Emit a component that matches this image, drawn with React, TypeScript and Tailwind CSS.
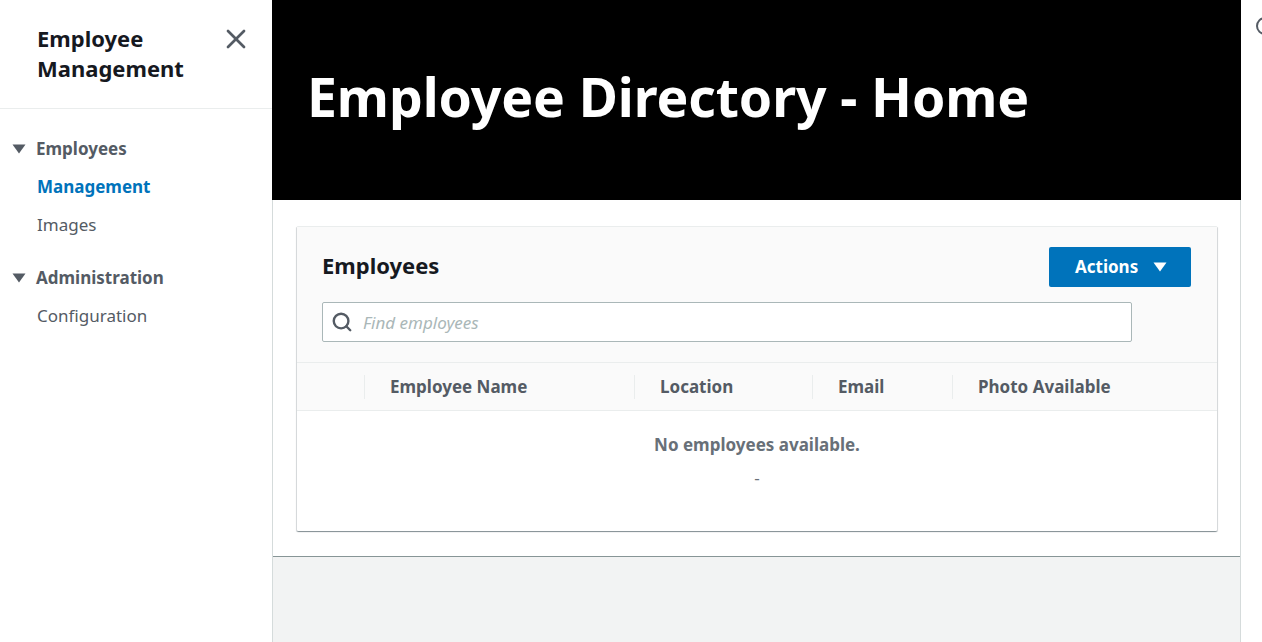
import { Search, X } from "lucide-react";

const columns = [
  { label: "Employee Name", width: "w-[270px]" },
  { label: "Location", width: "w-[178px]" },
  { label: "Email", width: "w-[140px]" },
  { label: "Photo Available", width: "flex-1" },
];

function Caret({ className }: { className: string }) {
  return (
    <svg viewBox="0 0 14 10" className={className} fill="currentColor">
      <path d="M0.5 0.5h13L7 9.5z" />
    </svg>
  );
}

function NavSection({ title, children }: { title: string; children: React.ReactNode }) {
  return (
    <div className="pl-3">
      <div className="flex h-[38px] items-center gap-[10px] text-[17px] font-bold text-[#545b64]">
        <Caret className="h-[10px] w-[14px]" />
        <span>{title}</span>
      </div>
      <div className="pl-[25px]">{children}</div>
    </div>
  );
}

export default function App() {
  return (
    <div className="flex h-screen overflow-hidden bg-white font-['Noto_Sans',sans-serif] text-[17px]">
      <aside className="w-[272px] shrink-0">
        <div className="flex h-[109px] justify-between border-b border-[#eaeded] pt-[23px] pr-[20px] pl-[37px]">
          <h2 className="text-[22px] leading-[30px] font-bold text-[#16191f]">
            Employee
            <br />
            Management
          </h2>
          <X className="h-[32px] w-[32px] text-[#545b64]" strokeWidth={2} />
        </div>
        <nav className="flex flex-col gap-[15px] pt-[21px]">
          <NavSection title="Employees">
            <div className="flex h-[38px] items-center font-bold text-[#0073bb]">Management</div>
            <div className="flex h-[38px] items-center text-[#545b64]">Images</div>
          </NavSection>
          <NavSection title="Administration">
            <div className="flex h-[38px] items-center text-[#545b64]">Configuration</div>
          </NavSection>
        </nav>
      </aside>

      <main className="flex w-[969px] shrink-0 flex-col border-r border-l border-[#d5dbdb]">
        <header className="-mr-px -ml-px flex h-[200px] items-center bg-black pb-[6px] pl-[35px]">
          <h1 className="text-[53.5px] leading-[60px] font-bold tracking-[-0.1px] text-white">
            Employee Directory - Home
          </h1>
        </header>
        <div className="h-[357px] border-b border-[#879596] bg-white pt-[26px] pr-[23px] pl-[24px]">
          <section className="h-[305px] rounded-[1px] border-t border-[#eaeded] bg-white shadow-[0_1px_1px_0_rgba(0,28,36,0.3),1px_1px_1px_0_rgba(0,28,36,0.15),-1px_1px_1px_0_rgba(0,28,36,0.15)]">
            <div className="h-[136px] border-b border-[#eaeded] bg-[#fafafa] pt-[20px] pr-[26px] pl-[25px]">
              <div className="flex h-[40px] items-center justify-between">
                <h2 className="pb-[4px] text-[22px] font-bold text-[#16191f]">Employees</h2>
                <button className="flex h-[40px] w-[142px] items-center gap-[15px] rounded-[2px] bg-[#0073bb] pl-[26px] font-bold text-white">
                  Actions
                  <Caret className="h-[10px] w-[14px]" />
                </button>
              </div>
              <div className="mt-[15px] flex h-[40px] w-[810px] items-center gap-[10px] rounded-[2px] border border-[#aab7b8] bg-white pl-[8px]">
                <Search className="h-[22px] w-[22px] text-[#545b64]" strokeWidth={2.6} />
                <span className="pt-px text-[17px] text-[#aab7b8] italic">Find employees</span>
              </div>
            </div>
            <div className="flex h-[48px] items-center border-b border-[#eaeded] bg-[#fafafa] pl-[67px]">
              {columns.map((column) => (
                <div
                  key={column.label}
                  className={`flex h-[24px] items-center border-l border-[#eaeded] pl-[25px] font-bold text-[#545b64] ${column.width}`}
                >
                  {column.label}
                </div>
              ))}
            </div>
            <div className="flex flex-col items-center pt-[22px]">
              <p className="leading-[24px] font-bold text-[#687078]">No employees available.</p>
              <p className="mt-[9px] leading-[24px] text-[#687078]">-</p>
            </div>
          </section>
        </div>
        <div className="flex-1 bg-[#f2f3f3]" />
      </main>

      <div className="relative flex-1 bg-white">
        <div className="absolute top-[17px] left-[15px] h-[18px] w-[18px] rounded-full border-2 border-[#545b64]" />
      </div>
    </div>
  );
}
